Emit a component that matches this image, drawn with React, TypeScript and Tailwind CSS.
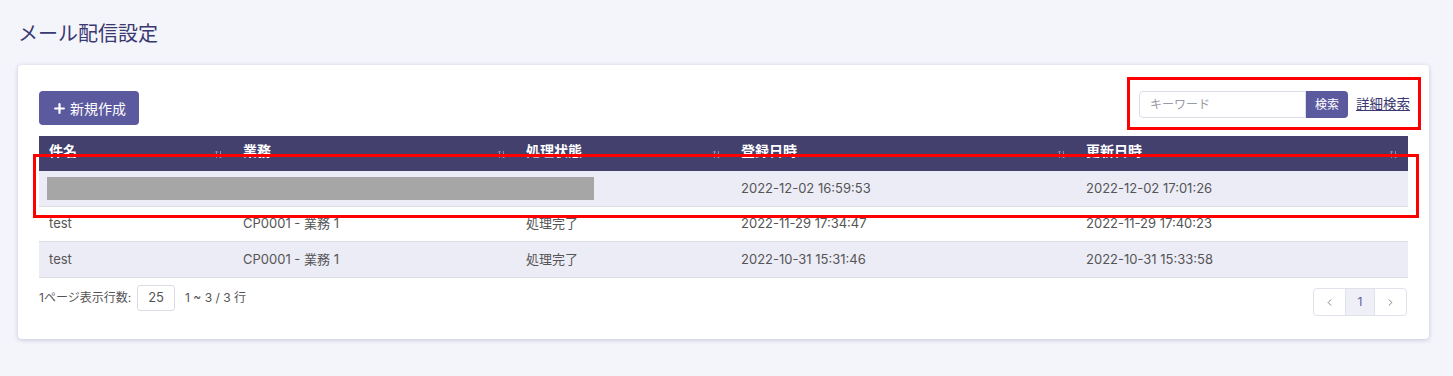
import { Plus, ChevronLeft, ChevronRight } from 'lucide-react';

const columns = [
  { label: '件名', width: 'w-[194px]' },
  { label: '業務', width: 'w-[283px]' },
  { label: '処理状態', width: 'w-[215px]' },
  { label: '登録日時', width: 'w-[345px]' },
  { label: '更新日時', width: 'flex-1' },
];

const rows = [
  { name: '', job: '', status: '', created: '2022-12-02 16:59:53', updated: '2022-12-02 17:01:26', masked: true },
  { name: 'test', job: 'CP0001 - 業務 1', status: '処理完了', created: '2022-11-29 17:34:47', updated: '2022-11-29 17:40:23' },
  { name: 'test', job: 'CP0001 - 業務 1', status: '処理完了', created: '2022-10-31 15:31:46', updated: '2022-10-31 15:33:58' },
];

function SortIcon() {
  return (
    <svg width="9" height="9" viewBox="0 0 9 9" className="opacity-40" fill="none" stroke="#ffffff" strokeWidth="1">
      <path d="M2.5 8V1M1 2.5L2.5 1L4 2.5" />
      <path d="M6.5 1v7M5 6.5L6.5 8L8 6.5" />
    </svg>
  );
}

export default function App() {
  return (
    <div
      className="relative min-h-[376px] w-full bg-[#f4f4fb] px-[18px] pt-[19px] text-[#555555]"
      style={{ fontFamily: 'Inter, "Noto Sans CJK JP", sans-serif' }}
    >
      {/* Title */}
      <h1 className="h-[30px] text-[20px] leading-[30px] text-[#3a3870]">メール配信設定</h1>

      {/* Card */}
      <div className="mt-[16px] h-[274px] w-[1411px] rounded-[4px] bg-white px-[21px] pt-[26px] shadow-[0_1px_4px_rgba(60,60,120,0.25)]">
        {/* Toolbar */}
        <div className="flex items-start justify-between">
          <button
            type="button"
            className="flex h-[34px] w-[100px] items-center justify-center gap-[3px] rounded-[4px] bg-[#5c5a9e] text-[14px] text-white"
          >
            <Plus className="h-[15px] w-[15px]" strokeWidth={3.5} />
            新規作成
          </button>
          <div className="mr-[-2px] flex items-center">
            <div className="flex h-[27px] w-[167px] items-center rounded-l-[4px] border border-[#dcdce6] px-[10px] text-[12px] text-[#9a9aa6]">
              キーワード
            </div>
            <button
              type="button"
              className="h-[27px] w-[42px] rounded-r-[4px] bg-[#5c5a9e] text-[12px] text-white"
            >
              検索
            </button>
            <a className="ml-[8px] text-[13.5px] text-[#3a3870] underline">詳細検索</a>
          </div>
        </div>

        {/* Table */}
        <div className="mt-[11px] w-[1369px]">
          <div className="flex h-[35px] bg-[#43406e] text-[14px] font-bold text-white">
            {columns.map((c) => (
              <div key={c.label} className={`${c.width} flex items-start justify-between pl-[10px] pr-[10px] pt-[5px]`}>
                <span className="leading-[20px]">{c.label}</span>
                <span className="mt-[9px]">
                  <SortIcon />
                </span>
              </div>
            ))}
          </div>
          {rows.map((r, i) => (
            <div
              key={i}
              className={`flex items-center border-b border-[#dcdce4] text-[13px] ${
                i === 1 ? 'h-[35px]' : 'h-[36px]'
              } ${i % 2 === 0 ? 'bg-[#ececf6]' : 'bg-white'}`}
            >
              {r.masked ? (
                <div className="w-[692px] pl-[8px]">
                  <div className="h-[23px] w-[547px] bg-[#a6a6a6]" />
                </div>
              ) : (
                <>
                  <div className="w-[194px] pl-[10px]">{r.name}</div>
                  <div className="w-[283px] pl-[10px]">{r.job}</div>
                  <div className="w-[215px] pl-[10px]">{r.status}</div>
                </>
              )}
              <div className="w-[345px] pl-[10px]">{r.created}</div>
              <div className="flex-1 pl-[10px]">{r.updated}</div>
            </div>
          ))}
        </div>

        {/* Footer */}
        <div className="mt-[7px] flex items-start justify-between">
          <div className="flex items-center text-[12px]">
            <span>1ページ表示行数:</span>
            <div className="ml-[6px] flex h-[26px] w-[38px] items-center justify-center rounded-[3px] border border-[#dcdce6] text-[13px]">
              25
            </div>
            <span className="ml-[10px]">1 ~ 3 / 3 行</span>
          </div>
          <div className="mt-[3px] mr-[1px] flex h-[28px] overflow-hidden rounded-[4px] border border-[#e2e2ec] text-[12px]">
            <div className="flex w-[31px] items-center justify-center text-[#777]">
              <ChevronLeft className="h-[11px] w-[11px]" strokeWidth={2} />
            </div>
            <div className="flex w-[30px] items-center justify-center border-x border-[#e2e2ec] bg-[#efeff8] text-[#5c5a9e]">
              1
            </div>
            <div className="flex w-[31px] items-center justify-center text-[#777]">
              <ChevronRight className="h-[11px] w-[11px]" strokeWidth={2} />
            </div>
          </div>
        </div>
      </div>

      {/* Annotation overlays */}
      <div className="pointer-events-none absolute left-[1127px] top-[77px] h-[53px] w-[294px] border-[3px] border-[#ff0000]" />
      <div className="pointer-events-none absolute left-[33px] top-[154px] h-[64px] w-[1386px] border-[3px] border-[#ff0000]" />
    </div>
  );
}
